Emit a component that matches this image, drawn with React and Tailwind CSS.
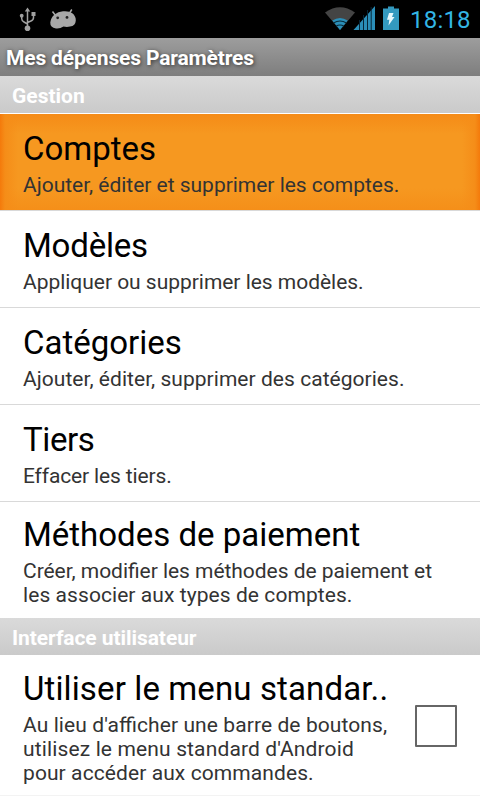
const groups = [
  {
    title: 'Gestion',
    header: 'h-[38px] border-b border-white',
    items: [
      {
        title: 'Comptes',
        lines: [{ text: 'Ajouter, éditer et supprimer les comptes.', tracking: 'tracking-[-0.02px]' }],
        active: true,
      },
      {
        title: 'Modèles',
        titleTracking: 'tracking-[-0.2px]',
        lines: [{ text: 'Appliquer ou supprimer les modèles.', tracking: 'tracking-[-0.03px]' }],
      },
      {
        title: 'Catégories',
        lines: [{ text: 'Ajouter, éditer, supprimer des catégories.', tracking: 'tracking-[0.04px]' }],
      },
      {
        title: 'Tiers',
        titleTracking: 'tracking-[-0.4px]',
        lines: [{ text: 'Effacer les tiers.', tracking: 'tracking-[-0.14px]' }],
      },
      {
        title: 'Méthodes de paiement',
        lines: [
          { text: 'Créer, modifier les méthodes de paiement et', tracking: 'tracking-[-0.04px]' },
          { text: 'les associer aux types de comptes.', tracking: 'tracking-[0.07px]' },
        ],
        row: 'h-[116px] pt-[13px]',
      },
    ],
  },
  {
    title: 'Interface utilisateur',
    header: 'h-[37px] tracking-[-0.07px]',
    items: [
      {
        title: 'Utiliser le menu standar..',
        titleTracking: 'tracking-[0.12px]',
        lines: [
          { text: "Au lieu d'afficher une barre de boutons,", tracking: 'tracking-[0.09px]' },
          { text: "utilisez le menu standard d'Android", tracking: 'tracking-[0.14px]' },
          { text: 'pour accéder aux commandes.', tracking: 'tracking-[0.09px]' },
        ],
        row: 'h-[141px] pt-[14px] border-b border-[#f3f3f3]',
        checkbox: true,
      },
    ],
  },
];

function StatusBar() {
  return (
    <div className="flex h-[38px] items-start bg-black">
      <svg className="ml-[19px] mt-[7px] h-[25px] w-[18px]" viewBox="0 0 18 25" fill="none" stroke="#a0a0a0" strokeWidth="1.5">
        <path d="M8.5 3v19M2.7 9v2.5Q2.7 14 5 15l3.5 2M14.5 7v3.5Q14.5 13 12 14l-3.5 1.5" />
        <path d="M8.5 .5l2.7 4h-5.400zM12.5 5h4v4h-4z" fill="#a0a0a0" stroke="none" />
        <circle cx="2.7" cy="8.7" r="1.9" fill="#a0a0a0" stroke="none" />
        <circle cx="8.5" cy="21.3" r="2.8" fill="#a0a0a0" stroke="none" />
      </svg>
      <svg className="ml-[13px] mt-[8px] h-[22px] w-[27px]" viewBox="0 0 27 22">
        <path d="M2.500 3.500l3 4M21.800 1.500l-2.500 4" stroke="#a8a8a8" strokeWidth="1.5" />
        <path d="M4.500 6.500Q8 3.500 13 3.300Q19 2.800 22 5Q26 8 25.800 12.500Q25.500 18 20 18.600Q16.500 19.200 13.500 18.500Q10 21 6 20.500Q0 19.500 .3 14.500Q.7 10 4.500 6.500Z" fill="#a8a8a8" />
        <circle cx="7.7" cy="9.8" r="1.4" fill="#222" />
        <circle cx="17" cy="9.4" r="1.4" fill="#222" />
      </svg>
      <svg className="ml-auto mt-[6px] h-[25px] w-[76px]" viewBox="325 6 76 25">
        <path d="M325 12.500Q340 2 355 12.500L340 30Z" fill="#444" />
        <path d="M332.300 20.500Q340 15.500 347.700 20.500L340 30Z" fill="#2b8eb8" />
        <path d="M333.500 23Q340 19 346.500 23M336 26.300Q340 23.700 344 26.300" fill="none" stroke="#082a38" strokeWidth="1.1" />
        <path d="M353.500 30L375 6V30Z" fill="#2b8eb8" />
        <path d="M359.500 20V30M363.500 15V30M367.500 10V30M371.200 7V30" stroke="#062638" strokeWidth="1" />
        <path d="M388 6.500h6v2h5v21.500h-16V8.500h5z" fill="#3399bf" />
        <path d="M389 13h4.500l-1.500 4h2.500l-6 8.500 .8-5.800h-2.300z" fill="#e6f7fc" />
      </svg>
      <span className="ml-[9px] mr-[9px] mt-[6px] w-[61px] whitespace-nowrap text-[24px] leading-[29px] tracking-[0.2px] text-[#33b5e5]">18:18</span>
    </div>
  );
}

function Preference({ item }) {
  return (
    <li
      className={
        'flex pl-[23px] ' +
        (item.row || 'h-[97px] border-b border-[#d9d9d9] pt-[15px]') +
        (item.active
          ? ' bg-[#f69820] bg-[linear-gradient(90deg,#f47a0b_0,#f58d18_5px,transparent_18px,transparent_462px,#f58d18_475px,#f47a0b_480px),linear-gradient(180deg,#f58b17_0,#f69820_20px,#f69820_74px,#f58f19_96px)]'
          : '')
      }
    >
      <div className="flex flex-col whitespace-nowrap">
        <h2 className={'text-[33px] leading-[39px] text-black ' + (item.titleTracking || '')}>{item.title}</h2>
        <p className="mt-[5px] flex flex-col text-[21px] leading-[24px] text-[#333] [font-feature-settings:'liga'_1]">
          {item.lines.map((line) => (
            <span key={line.text} className={line.tracking}>
              {line.text}
            </span>
          ))}
        </p>
      </div>
      {item.checkbox && (
        <span className="ml-auto mr-[23px] mt-[36px] h-[42px] w-[42px] shrink-0 rounded-[1px] border-2 border-[#666]" />
      )}
    </li>
  );
}

export default function App() {
  return (
    <main className="flex h-[800px] w-[480px] flex-col overflow-hidden bg-white font-['Roboto',sans-serif]">
      <StatusBar />
      <h1 className="h-[38px] bg-linear-to-b from-[#9d9d9d] to-[#7e7e7e] pl-[6px] text-[21px] leading-[40px] font-bold tracking-[-0.16px] whitespace-nowrap text-white [text-shadow:1px_1px_4px_#333]">
        Mes dépenses Paramètres
      </h1>
      {groups.map((group) => (
        <section key={group.title}>
          <h2 className={'bg-linear-to-b from-[#dadada] to-[#cacaca] bg-clip-padding pl-[12px] text-[21px] leading-[40px] font-bold text-white ' + group.header}>
            {group.title}
          </h2>
          <ul>
            {group.items.map((item) => (
              <Preference key={item.title} item={item} />
            ))}
          </ul>
        </section>
      ))}
    </main>
  );
}
